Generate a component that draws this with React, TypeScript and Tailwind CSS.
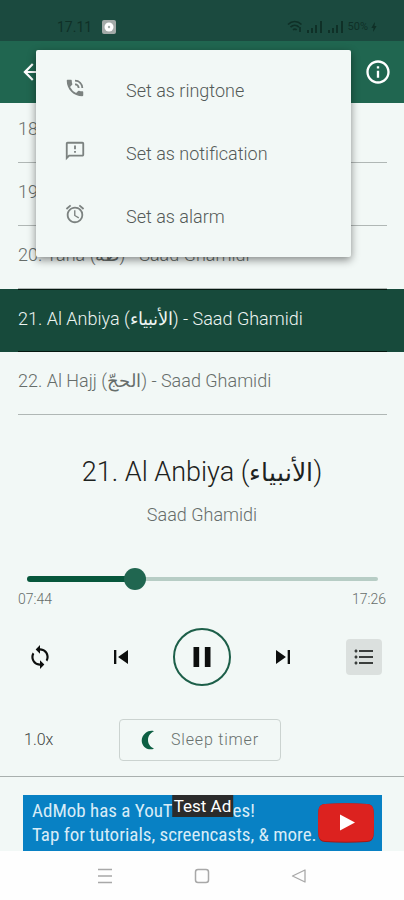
import { useState } from "react";
import {
  MdAlarm,
  MdArrowBack,
  MdBolt,
  MdFormatListBulleted,
  MdInfoOutline,
  MdOutlineSmsFailed,
  MdPause,
  MdPhoneInTalk,
  MdSkipNext,
  MdSkipPrevious,
  MdSync,
} from "react-icons/md";

const TRACKS = [
  { no: 18, name: "Al Kahf", arabic: "الكهف" },
  { no: 19, name: "Maryam", arabic: "مريم" },
  { no: 20, name: "Taha", arabic: "طه" },
  { no: 21, name: "Al Anbiya", arabic: "الأنبياء" },
  { no: 22, name: "Al Hajj", arabic: "الحجّ" },
];

const MENU = [
  { label: "Set as ringtone", Icon: MdPhoneInTalk },
  { label: "Set as notification", Icon: MdOutlineSmsFailed },
  { label: "Set as alarm", Icon: MdAlarm },
];

function SignalBars() {
  return (
    <svg width="16" height="12" viewBox="0 0 16 12" fill="currentColor" aria-hidden="true">
      <rect x="0" y="9" width="2" height="3" />
      <rect x="4" y="7" width="2" height="5" />
      <rect x="8" y="4" width="2" height="8" />
      <rect x="13" y="0" width="2" height="12" />
    </svg>
  );
}

function StatusBar() {
  return (
    <div className="flex h-[41px] items-center bg-[#1b4a3f] pt-3 pr-6 pl-[57px] text-[#0f3027]">
      <span className="text-sm leading-4">17.11</span>
      <svg className="ml-[10px]" width="14" height="14" viewBox="0 0 14 14" aria-hidden="true">
        <rect width="14" height="14" rx="2" fill="#a3aaa8" />
        <circle cx="7" cy="7" r="4.5" fill="#fff" />
        <circle cx="7" cy="7" r="1.2" fill="#a3aaa8" />
      </svg>
      <div className="ml-auto flex items-center">
        <svg width="16" height="13" viewBox="0 0 16 13" fill="none" stroke="currentColor" strokeWidth="1.7" aria-hidden="true">
          <path d="M1 4.5C5 .5 10.500 .5 14.500 4.500M3.500 7.200c2.500-2.400 6-2.400 8.500 0M6 9.800c1.200-1 2.500-1 3.700 0" />
          <path d="M13 7v5" />
        </svg>
        <span className="ml-1 flex gap-[5px]">
          <SignalBars />
          <SignalBars />
        </span>
        <span className="ml-1 text-[11px] leading-4">50%</span>
        <MdBolt size={12} />
      </div>
    </div>
  );
}

function ContextMenu() {
  return (
    <div
      role="menu"
      className="absolute top-[50px] right-[53px] left-9 z-10 rounded-xs bg-[#f2f8f6] py-[9px] shadow-[0_3px_8px_rgba(0,0,0,0.45)]"
    >
      {MENU.map(({ label, Icon }) => (
        <button
          key={label}
          role="menuitem"
          className="flex h-[63px] w-full items-center gap-10 pl-7 text-left text-lg font-light text-[#545a58]"
        >
          <Icon size={22} className="mb-[6px] text-[#7c8280]" />
          {label}
        </button>
      ))}
    </div>
  );
}

function TrackList() {
  return (
    <ul className="flex h-[312px] flex-col justify-end overflow-hidden">
      {TRACKS.map(({ no, name, arabic }) => {
        const selected = no === 21;
        return (
          <li
            key={no}
            className={
              selected
                ? "shrink-0 bg-[#174a3b] pr-[17px] pl-[18px] text-[#eef5f2]"
                : "shrink-0 pr-[17px] pl-[18px] text-[#666d6a]"
            }
          >
            <button
              className={
                selected
                  ? "flex h-[63px] w-full items-center border-y border-[#04170f] pb-1 text-left text-lg font-light"
                  : "flex h-[63px] w-full items-center border-b border-[#b0b7b5] pb-1 text-left text-lg font-light"
              }
            >
              <span>
                {no}. {name} (<bdi>{arabic}</bdi>) - Saad Ghamidi
              </span>
            </button>
          </li>
        );
      })}
    </ul>
  );
}

function Player() {
  const [position, setPosition] = useState(308);
  return (
    <section className="pt-[37px]">
      <h1 className="text-center text-[27px] leading-10 font-light text-[#1d2220]">
        21. Al Anbiya (<bdi className="text-[25px]">الأنبياء</bdi>)
      </h1>
      <p className="mt-[10px] text-center text-lg leading-6 font-light text-[#666d6a]">Saad Ghamidi</p>

      <div className="mt-10 mr-[26px] ml-[27px] grid items-center">
        <div className="col-start-1 row-start-1 flex items-center">
          <div className="h-[6px] rounded-l-full bg-[#07573c]" style={{ width: `${(position / 1046) * 100}%` }} />
          <div className="h-1 flex-1 rounded-r-full bg-[#b7cdc5]" />
        </div>
        <input
          type="range"
          aria-label="Position"
          min={0}
          max={1046}
          value={position}
          onChange={(e) => setPosition(Number(e.target.value))}
          className="z-1 col-start-1 row-start-1 h-6 w-full appearance-none bg-transparent [&::-webkit-slider-thumb]:size-[22px] [&::-webkit-slider-thumb]:appearance-none [&::-webkit-slider-thumb]:rounded-full [&::-webkit-slider-thumb]:bg-[#206650]"
        />
      </div>
      <div className="flex justify-between px-[18px] text-sm leading-4 font-light text-[#666d6a]">
        <span>07:44</span>
        <span>17:26</span>
      </div>

      <div className="mt-[21px] grid grid-cols-5 items-center justify-items-center text-[#0d0f0e]">
        <button aria-label="Repeat">
          <MdSync size={26} />
        </button>
        <button aria-label="Previous">
          <MdSkipPrevious size={28} />
        </button>
        <button
          aria-label="Pause"
          className="flex size-[58px] items-center justify-center rounded-full border-2 border-[#1d5f49]"
        >
          <MdPause size={34} />
        </button>
        <button aria-label="Next">
          <MdSkipNext size={28} />
        </button>
        <button aria-label="Playlist" className="flex size-9 items-center justify-center rounded-sm bg-[#dbe0de] text-[#3a3e3c]">
          <MdFormatListBulleted size={24} />
        </button>
      </div>

      <div className="mt-[33px] grid grid-cols-5 items-center border-b border-[#a9b0ae] pb-[15px]">
        <button className="pl-6 text-left text-base font-light text-[#3f4543]">1.0x</button>
        <button className="col-span-3 mr-1 flex h-[42px] w-[162px] items-center justify-center gap-4 justify-self-center rounded-sm border border-[#cbd3d0] text-base font-light tracking-wider text-[#69716e]">
          <svg width="14" height="20" viewBox="0 0 14 20" fill="#0d5f43" aria-hidden="true">
            <path d="M13 1.200C10.500 .4 7 .8 4.500 3 1 6 0 10 1.200 13.500 3 18.500 8 20.500 13 18.700 8.700 16.500 7 13.500 7 10s1.800-7 6-8.800Z" />
          </svg>
          Sleep timer
        </button>
      </div>
    </section>
  );
}

function AdBanner() {
  return (
    <a
      href="#ad"
      className="relative mt-[18px] mr-[22px] ml-[23px] flex h-14 items-center justify-between bg-[#0881c4] pr-2 pl-[9px]"
    >
      <span className="font-['Roboto_Condensed','Roboto',sans-serif] text-[19px] leading-6 whitespace-nowrap text-[#d8ecf7]">
        AdMob has a YouTube Series!
        <br />
        Tap for tutorials, screencasts, &amp; more.
      </span>
      <svg className="shrink-0" width="56" height="40" viewBox="0 0 56 40" aria-hidden="true">
        <path d="M7 1Q28-.5 49 1q6 .5 6.500 6 1 13 0 26-.5 5.500-6.500 6-21 1.500-42 0-6-.5-6.500-6-1-13 0-26Q1 1.500 7 1Z" fill="#a31816" />
        <path d="M7 1Q28-.5 49 1q6 .5 6.500 6 1 12 0 25-.5 5.500-6.500 6-21 1.500-42 0-6-.5-6.500-6-1-12 0-25Q1 1.500 7 1Z" fill="#dc221f" />
        <path d="M22 11.500 37 19.500 22 27.500Z" fill="#fff" />
      </svg>
      <span className="absolute top-0 left-1/2 -translate-x-1/2 bg-[#2b2b2b] px-[2px] text-[17px] leading-[22px] whitespace-nowrap text-white">
        Test Ad
      </span>
    </a>
  );
}

function NavBar() {
  return (
    <nav className="flex h-[49px] items-center justify-center gap-[81px] bg-[#fefefe] text-[#a8a8a8]">
      <button aria-label="Recents">
        <svg width="16" height="16" viewBox="0 0 16 16" stroke="currentColor" strokeWidth="1.5" aria-hidden="true">
          <path d="M1 1.500h14M1 8h14M1 14.500h14" />
        </svg>
      </button>
      <button aria-label="Home">
        <svg width="16" height="16" viewBox="0 0 16 16" fill="none" stroke="currentColor" strokeWidth="1.5" aria-hidden="true">
          <rect x="1.500" y="1.500" width="13" height="13" rx="2.500" />
        </svg>
      </button>
      <button aria-label="Back">
        <svg width="16" height="16" viewBox="0 0 16 16" fill="none" stroke="currentColor" strokeWidth="1.300" strokeLinejoin="round" aria-hidden="true">
          <path d="M14 2v12L1.500 8Z" />
        </svg>
      </button>
    </nav>
  );
}

export default function App() {
  return (
    <div className="relative min-h-screen bg-[#f2f8f6] font-['Roboto','DejaVu_Sans',sans-serif]">
      <StatusBar />
      <header className="flex h-[62px] items-center justify-between bg-[#206650] pr-3 pl-[19px] text-white">
        <button aria-label="Back">
          <MdArrowBack size={26} />
        </button>
        <button aria-label="Info">
          <MdInfoOutline size={28} />
        </button>
      </header>
      <ContextMenu />
      <TrackList />
      <Player />
      <AdBanner />
      <NavBar />
    </div>
  );
}
